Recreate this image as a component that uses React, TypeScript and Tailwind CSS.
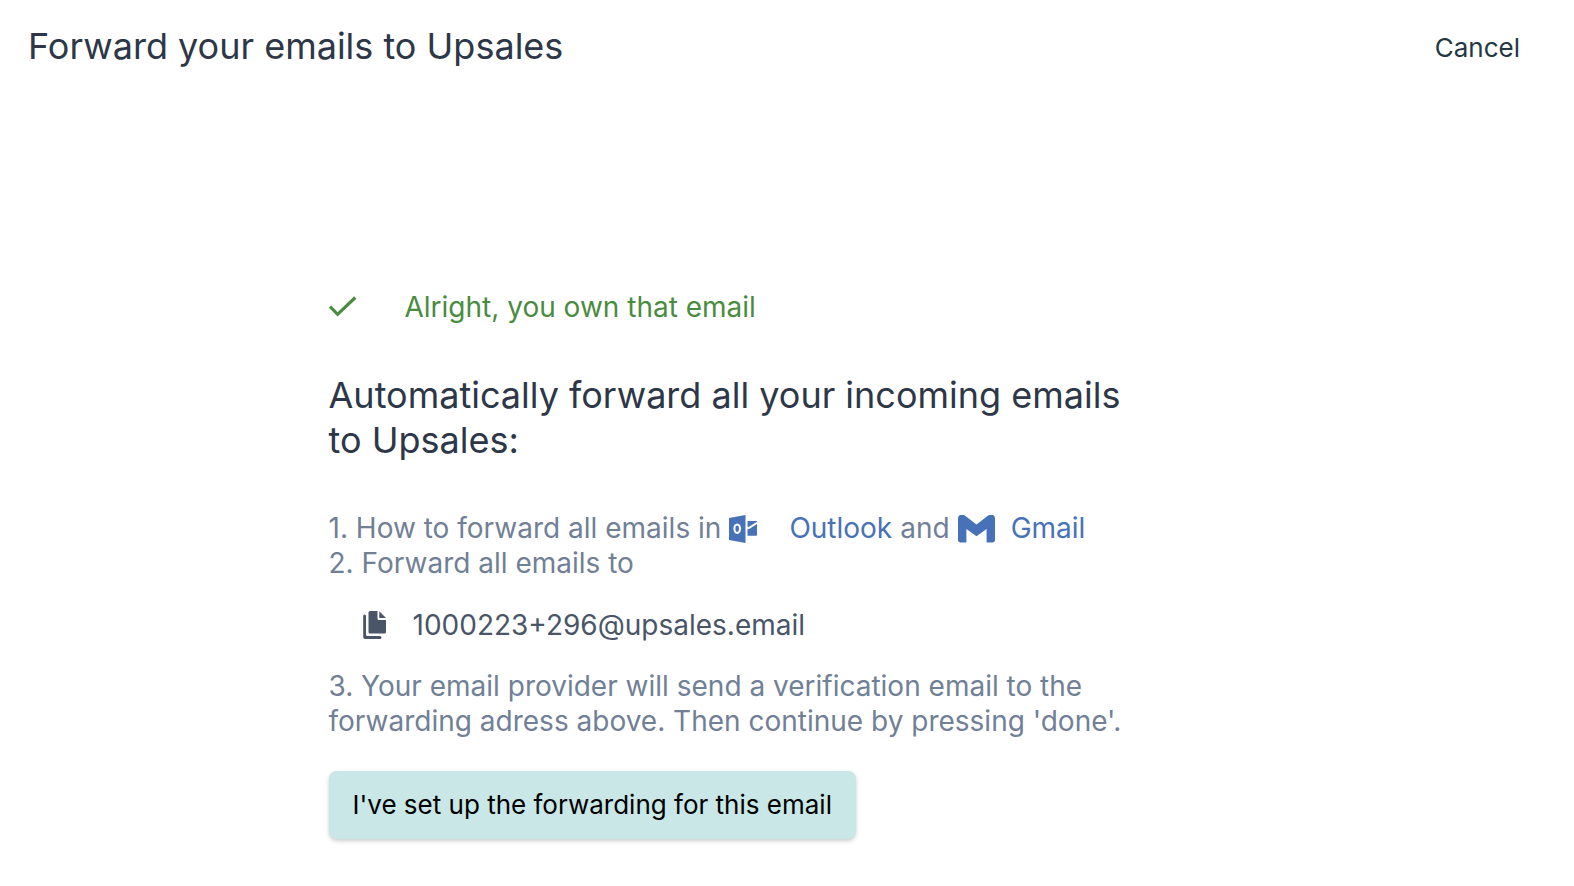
import React from "react";

function CheckIcon() {
  return (
    <svg className="h-7 w-7 shrink-0" viewBox="0 0 28 28" fill="none" aria-hidden="true">
      <path d="M1 12.500 8.600 20.300 26.300 3.500" stroke="currentColor" strokeWidth="3.200" />
    </svg>
  );
}

function OutlookIcon() {
  return (
    <svg className="h-7 w-7 shrink-0" viewBox="0 1 28 28" aria-hidden="true">
      <path fill="currentColor" fillRule="evenodd" d="M0 4 16.500 1v28L0 26ZM8.200 9.500C5.900 9.500 4.400 11.700 4.400 14.700s1.500 5.200 3.800 5.200 3.800-2.200 3.800-5.200-1.500-5.200-3.800-5.200Zm0 2.100c1.100 0 1.800 1.200 1.800 3.100s-.7 3.100-1.800 3.100-1.800-1.200-1.800-3.100.7-3.100 1.800-3.100Z" />
      <path fill="currentColor" d="M18.500 7H28V7.700L19.600 13 18.500 12.500ZM28 9.900V21Q28 21.800 27.200 21.800H18.500V14.600L19.800 15.200Z" />
    </svg>
  );
}

function GmailIcon() {
  return (
    <svg className="h-7 w-[37px] shrink-0" viewBox="0 0 37 28" aria-hidden="true">
      <path fill="currentColor" d="M0 3.500C0 0 4-1.500 6.800.6L18.500 9.400 30.200.6C33-1.500 37 0 37 3.500v21.500c0 1.500-1 2.500-2.500 2.500H28.600V14L18.500 21.200 8.400 14v13.500H2.500C1 27.500 0 26.500 0 25Z" />
    </svg>
  );
}

function CopyIcon() {
  return (
    <svg className="h-7 w-6 shrink-0" viewBox="0 0 24 28" aria-hidden="true">
      <path fill="currentColor" d="M7 0h7.500v7.500q0 1.500 1.500 1.500h7v12q0 1.500-1.500 1.500H7q-1.500 0-1.500-1.500v-19.500Q5.500 0 7 0ZM16.300.3l6.700 6.700h-6.700Z" />
      <path fill="currentColor" d="M1.500 3.500Q3 3.500 3 5V23.500q0 1.500 1.500 1.500H17q1.500 0 1.500 1.500T17 28H2Q.2 28 .2 26V5Q.2 3.500 1.500 3.500Z" />
    </svg>
  );
}

export default function App() {
  return (
    <div className="min-h-screen bg-white font-['Inter',sans-serif] text-[#2d3748]">
      <header className="flex items-center justify-between px-7 pt-[21px]">
        <h1 className="text-[36px] leading-[48px]">Forward your emails to Upsales</h1>
        <button type="button" className="px-[26px] pt-1 text-[26px] leading-[45px] text-[#233843]">Cancel</button>
      </header>
      <main className="mx-auto flex max-w-[917px] flex-col items-start pt-[220px] text-[28px] leading-[35px] text-[#718096]">
        <p className="flex items-center gap-12 text-[#4a8c3f]">
          <CheckIcon />
          Alright, you own that email
        </p>
        <h2 className="mt-12 max-w-[800px] text-[36px] leading-[45px] text-[#2d3748]">
          Automatically forward all your incoming emails to Upsales:
        </h2>
        <ol className="mt-12 max-w-[800px]">
          <li className="flex items-center gap-2">
            1. How to forward all emails in
            <a href="#outlook" className="flex items-center gap-8 text-[#4872b8]"><OutlookIcon />Outlook</a>
            and
            <a href="#gmail" className="flex items-center gap-4 text-[#4872b8]"><GmailIcon />Gmail</a>
          </li>
          <li>
            2. Forward all emails to
            <button type="button" className="ml-[34px] flex h-22 items-center gap-[26px] text-[#4a5568]"><CopyIcon />1000223+296@upsales.email</button>
          </li>
          <li>3. Your email provider will send a verification email to the forwarding adress above. Then continue by pressing 'done'.</li>
        </ol>
        <button type="button" className="mt-8 rounded-lg bg-[#c8e7e6] px-6 py-4 text-[26px] leading-9 text-black shadow-[0_2px_4px_rgba(0,0,0,0.2)]">
          I've set up the forwarding for this email
        </button>
      </main>
    </div>
  );
}
